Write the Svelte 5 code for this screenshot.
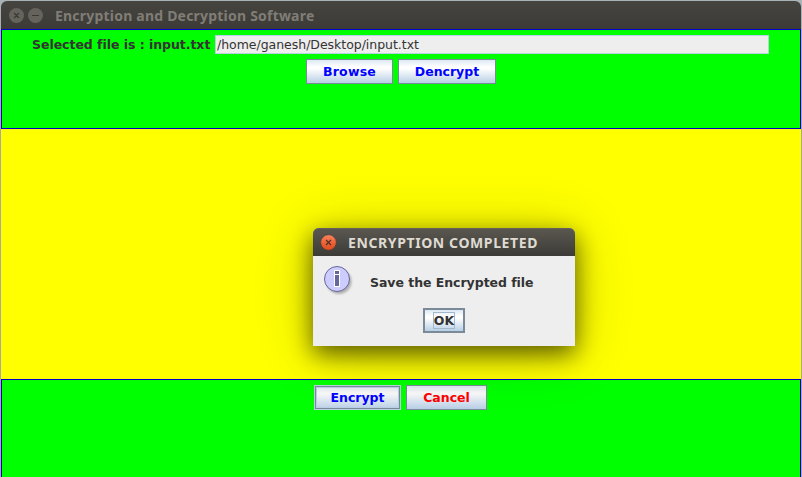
<script>
  let path = $state('/home/ganesh/Desktop/input.txt');
</script>

<div class="desktop">
  <main class="window">
    <header class="titlebar">
      <svg width="48" height="28" viewBox="0 0 48 28">
        <circle cx="15.5" cy="14.5" r="7.5" fill="#66635c" />
        <circle cx="34.5" cy="14.5" r="7.5" fill="#66635c" />
        <path d="M13 12l5 5M18 12l-5 5M31 14.5h7" stroke="#3a3934" stroke-width="1.2" fill="none" />
      </svg>
      <span class="title main-title">Encryption and Decryption Software</span>
    </header>

    <section class="panel top">
      <div class="file-row">
        <label for="path">Selected file is : input.txt</label>
        <input id="path" type="text" readonly bind:value={path} />
      </div>
      <div class="buttons">
        <button style:width="87px"><span class="browse">Browse</span></button>
        <button style:width="98px"><span>Dencrypt</span></button>
      </div>
    </section>

    <section class="middle"></section>

    <section class="panel bottom">
      <div class="buttons">
        <button class="pressed" style:width="87px"><span>Encrypt</span></button>
        <button class="cancel" style:width="81px"><span>Cancel</span></button>
      </div>
    </section>
  </main>

  <div class="dialog" role="dialog" aria-label="Encryption completed">
    <header class="dialog-title">
      <svg width="35" height="28" viewBox="0 0 35 28">
        <defs>
          <linearGradient id="close" x1="0" y1="0" x2="0" y2="1">
            <stop offset="0" stop-color="#f58561" />
            <stop offset=".5" stop-color="#ee6337" />
            <stop offset="1" stop-color="#dc4b1c" />
          </linearGradient>
        </defs>
        <circle cx="15.5" cy="14.5" r="7.8" fill="url(#close)" stroke="#3d3b36" stroke-width=".6" />
        <path d="M13 12l5 5M18 12l-5 5" stroke="#4a3028" stroke-width="1.1" />
      </svg>
      <span class="title dlg-title">ENCRYPTION COMPLETED</span>
    </header>
    <div class="message">
      <svg width="34" height="34" viewBox="0 0 34 34">
        <defs>
          <filter id="soft" x="-20%" y="-20%" width="150%" height="150%">
            <feGaussianBlur stdDeviation="1.3" />
          </filter>
        </defs>
        <circle cx="16" cy="15.5" r="12.5" fill="#999" opacity=".75" filter="url(#soft)" />
        <circle cx="14" cy="13" r="12.5" fill="#ccccff" stroke="#666699" />
        <path d="M11 4h6v17h-6z" fill="#fff" />
        <path d="M12 5h4v3h-4zM12 9h4v11h-4z" fill="#666699" />
      </svg>
      <span class="save">Save the Encrypted file</span>
    </div>
    <button class="ok"><span>OK</span></button>
  </div>
</div>

<style>
  .desktop {
    position: relative;
    width: 802px;
    height: 477px;
    box-sizing: border-box;
    padding: 1px 1px 0;
    overflow: hidden;
    background: linear-gradient(#a7b2b7, #aaa6a6 30%);
    font: bold 12.5px 'DejaVu Sans', sans-serif;
    color: #333;
  }
  .window {
    display: flex;
    flex-direction: column;
    height: 476px;
  }
  .titlebar {
    display: flex;
    align-items: center;
    height: 28px;
    border-radius: 6px 6px 0 0;
    background: linear-gradient(#45443f, #3c3b37);
  }
  svg {
    display: block;
    flex: none;
  }
  .title {
    font-family: 'Noto Sans', 'Open Sans', sans-serif;
    font-size: 14px;
    white-space: nowrap;
    line-height: 20px;
  }
  .main-title {
    margin: 1px 0 0 6px;
    letter-spacing: 0.21px;
    color: #807d76;
  }
  .panel {
    box-sizing: border-box;
    border: 1px solid #00c;
    background: #0f0;
  }
  .top {
    height: 100px;
    padding-top: 5px;
  }
  .middle {
    height: 250px;
    background: #ff0;
  }
  .bottom {
    flex: 1;
    border-bottom: 0;
    padding-top: 5px;
  }
  .file-row {
    display: flex;
    justify-content: flex-end;
    align-items: center;
    gap: 5px;
    padding-right: 31px;
    height: 19px;
  }
  label {
    width: 178px;
    letter-spacing: -0.04px;
    white-space: nowrap;
  }
  input {
    box-sizing: border-box;
    width: 554px;
    height: 19px;
    margin: 0;
    padding: 0 1px;
    border: 1px solid #b8cfe5;
    border-radius: 0;
    background: #eee;
    color: #333;
    font: 12.5px 'DejaVu Sans', sans-serif;
    letter-spacing: -0.03px;
    outline: none;
  }
  .buttons {
    display: flex;
    justify-content: center;
    gap: 5px;
    margin-top: 5px;
  }
  .bottom .buttons {
    margin-top: 0;
    padding-right: 1px;
  }
  button {
    display: flex;
    align-items: center;
    justify-content: center;
    box-sizing: border-box;
    height: 25px;
    padding: 0;
    border: 1px solid #7a8a99;
    border-radius: 0;
    background: linear-gradient(#dde8f3 0, #fff 30%, #fff 38%, #b8cfe5);
    color: #00f;
    font: inherit;
    white-space: nowrap;
  }
  .browse {
    letter-spacing: 0.2px;
  }
  .pressed {
    border-color: #b8cfe5;
    box-shadow: inset 0 0 0 1px #7a8a99, inset 0 0 0 2px #b8cfe5;
  }
  .bottom button {
    background: linear-gradient(#dce6ef 0, #f8f8f8 30%, #f4f6f8 38%, #b8cfe5);
  }
  .bottom .cancel {
    color: #f00;
  }
  .dialog {
    position: absolute;
    left: 313px;
    top: 228px;
    width: 262px;
    height: 118px;
    border-radius: 6px 6px 0 0;
    background: #eee;
    box-shadow: 0 8px 24px rgba(0, 0, 0, 0.6), 0 5px 60px rgba(0, 0, 0, 0.2);
  }
  .dialog-title {
    display: flex;
    align-items: center;
    height: 28px;
    border-radius: 6px 6px 0 0;
    background: linear-gradient(#5a5850, #3d3b37);
    box-shadow: inset 0 1px #64625a;
  }
  .dlg-title {
    margin-top: 2px;
    letter-spacing: 0.6px;
    color: #dfdbd2;
  }
  .message {
    display: flex;
    align-items: center;
    gap: 13px;
    height: 34px;
    padding: 10px 0 0 10px;
  }
  .save {
    margin-top: -2px;
    letter-spacing: -0.04px;
    white-space: nowrap;
  }
  .ok {
    width: 42px;
    margin: 8px auto 0;
    border: 2px solid #7a8a99;
    color: #333;
  }
  .ok span {
    display: flex;
    align-items: center;
    justify-content: center;
    box-sizing: border-box;
    width: 22px;
    height: 17px;
    border: 1px solid #a3b8cc;
  }
</style>
